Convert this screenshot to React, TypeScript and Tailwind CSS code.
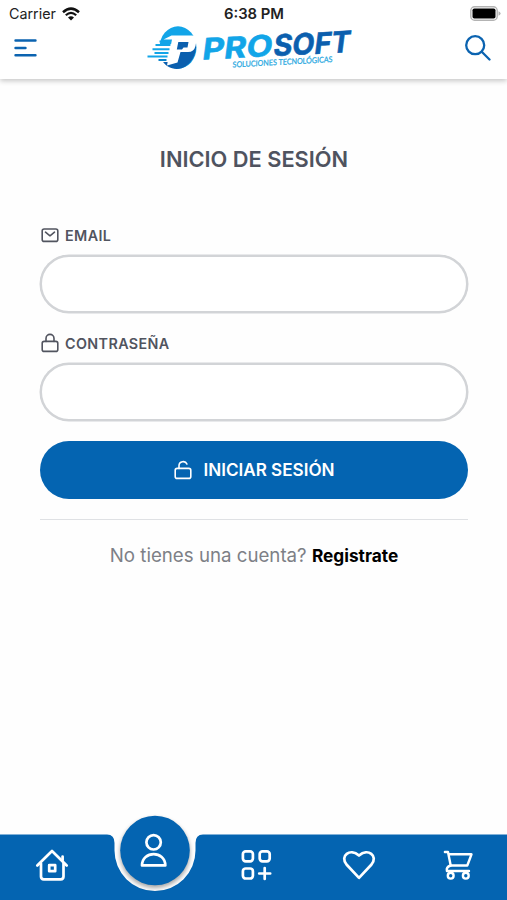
import type { ReactNode } from "react";

function WifiIcon() {
  return (
    <svg className="h-[14px] w-[18px]" viewBox="0 0 18 14" fill="none">
      <path d="M1 5.2Q9-2 17 5.2" stroke="#111" strokeWidth="2.5" />
      <path d="M3.8 8.2Q9 3.4 14.2 8.2" stroke="#111" strokeWidth="2.2" />
      <path d="M9 13.6 6 10.6Q9 8 12 10.6Z" fill="#111" />
    </svg>
  );
}

function BatteryIcon() {
  return (
    <svg className="h-[15px] w-[31px]" viewBox="0 0 31 15" fill="none">
      <rect x="0.8" y="0.8" width="26.4" height="13.4" rx="3.8" stroke="#b3b3b3" strokeWidth="1.4" />
      <rect x="2.5" y="2.5" width="23" height="10" rx="1.8" fill="#000" />
      <path d="M28.5 5.2Q30.6 6 30.6 7.5T28.5 9.8Z" fill="#b3b3b3" />
    </svg>
  );
}

function Logo() {
  return (
    <svg className="h-[46px] w-[212px] overflow-visible" viewBox="145.500 25 212 46">
      <ellipse cx="178.500" cy="47.500" rx="18.500" ry="21.200" fill="#12a5e8" />
      <path d="M196 41C198.500 53 192 65 182 68.300C174 70.500 166 67 162 59.500L172 60L186 40Z" fill="#0b5fae" />
      <path d="M158 44H173V62H158Z" fill="#fff" />
      <g stroke="#12a5e8" strokeWidth="2">
        <path d="M156 45H171M160 41.500H171M153 49.300H170M155 53H169M148 56.500H168" />
        <path d="M159 60H167" stroke="#0b84cc" />
      </g>
      <path
        d="M172 35.500H192.500Q198 35.500 197 40.500L196 46Q194.500 52 188.500 52H181L178 62.500L167.500 65.500L170 52L172.500 39.500H164Z"
        fill="#fff"
      />
      <path d="M178.800 42H189L188 47.500H184L182.500 49.500H177.300Z" fill="#0b5fae" />
      <g
        transform="matrix(1 -0.05 -0.13 1 202 59.500)"
        fontFamily="Inter, sans-serif"
        fontSize="29.5"
        fontWeight="700"
        strokeWidth="0.6"
      >
        <text x="0" y="0" textLength="70" lengthAdjust="spacingAndGlyphs" fill="#12a5e8" stroke="#12a5e8">
          PRO
        </text>
        <text x="71" y="0" textLength="77" lengthAdjust="spacingAndGlyphs" fill="#0b5fae" stroke="#0b5fae">
          SOFT
        </text>
      </g>
      <text
        transform="matrix(1 -0.055 -0.02 1 233 67.500)"
        fontFamily="Lato, sans-serif"
        fontSize="8"
        fontWeight="400"
        textLength="100"
        lengthAdjust="spacingAndGlyphs"
        fill="#27a8df"
        stroke="#27a8df"
        strokeWidth="0.25"
      >
        SOLUCIONES TECNOLÓGICAS
      </text>
    </svg>
  );
}

function Header() {
  return (
    <header className="relative h-[79px] bg-white shadow-[0_2px_5px_rgba(0,0,0,0.22)]">
      <div className="grid h-[27px] grid-cols-3 items-center pl-[8px] pr-[7px] text-[#222]">
        <div className="flex items-center gap-[6px] pl-px text-[14.3px]">
          Carrier
          <WifiIcon />
        </div>
        <div className="whitespace-nowrap pt-px text-center text-[14.8px] font-semibold">6:38 PM</div>
        <div className="-mr-px flex justify-end">
          <BatteryIcon />
        </div>
      </div>
      <div className="flex h-[42px] items-center justify-between pl-[14px] pr-[16px]">
        <svg className="h-[20px] w-[23px]" viewBox="0 0 23 20" stroke="#0b63b0" strokeWidth="2.4" strokeLinecap="round">
          <path d="M1.500 2.500H21.500M1.500 10H11.500M1.500 17.300H21.500" />
        </svg>
        <Logo />
        <svg className="h-[26px] w-[26px]" viewBox="0 0 26 26" fill="none" stroke="#0b63b0" strokeWidth="2.3" strokeLinecap="round">
          <circle cx="10.200" cy="10.200" r="9" />
          <path d="m17 17 7.500 7.500" />
        </svg>
      </div>
    </header>
  );
}

function MailIcon() {
  return (
    <svg className="h-[20px] w-[20px]" viewBox="0 0 20 20" fill="none" stroke="currentColor" strokeWidth="1.600" strokeLinecap="round" strokeLinejoin="round">
      <rect x="2.200" y="4" width="15.600" height="12.400" rx="2" />
      <path d="m5.500 7.200 4.500 3.600 4.500-3.600" />
    </svg>
  );
}

function LockIcon({ open = false }: { open?: boolean }) {
  return (
    <svg className="h-[20px] w-[20px]" viewBox="0 0 20 20" fill="none" stroke="currentColor" strokeWidth="1.600" strokeLinecap="round" strokeLinejoin="round">
      <rect x="2.200" y="8.400" width="15.600" height="10" rx="2" />
      <path d={open ? "M6 8.400V5.800C6 1 12.400.4 13.900 4" : "M6 8.400V5.400a4 4 0 0 1 8 0v3"} />
    </svg>
  );
}

function Field({ label, type, icon }: { label: string; type: string; icon: ReactNode }) {
  return (
    <label className="block text-[#51545f]">
      <span className="flex h-[20px] items-center gap-[5px] text-[14.3px] font-semibold tracking-[0.4px]">
        {icon}
        <span className="pt-px">{label}</span>
      </span>
      <input
        type={type}
        className="mt-[10px] block h-[58px] w-full rounded-full border-2 border-[#d2d4d7] bg-white px-6 shadow-[0_0_0_0.5px_#d2d4d7] outline-none"
      />
    </label>
  );
}

function TabButton({ name, children }: { name: string; children: ReactNode }) {
  return (
    <button aria-label={name} className="w-9">
      <svg className="h-9 w-9" viewBox="0 0 36 36" fill="none" stroke="#fff" strokeWidth="2.700" strokeLinecap="round" strokeLinejoin="round">
        {children}
      </svg>
    </button>
  );
}

function TabBar() {
  return (
    <nav className="relative h-[88px]">
      <svg className="absolute inset-0 h-[88px] w-full" viewBox="0 0 507 88">
        <defs>
          <filter id="soft" x="-20%" y="-20%" width="140%" height="150%">
            <feGaussianBlur stdDeviation="2" />
          </filter>
        </defs>
        <path d="M0 22.500H107Q114.500 22.500 114.500 31V38.500A40.500 40.500 0 0 0 195.500 38.500V31Q195.500 22.500 203 22.500H507V88H0Z" fill="#0464b1" />
        <circle cx="155" cy="41" r="35" fill="#000" opacity="0.350" filter="url(#soft)" />
        <circle cx="155" cy="38.500" r="34.800" fill="#0464b1" />
        <g fill="none" stroke="#fff" strokeWidth="2.700" strokeLinejoin="round">
          <circle cx="153.600" cy="30.300" r="7.200" />
          <path d="M142 53.400C142 38.300 165.300 38.300 165.300 53.400Z" />
        </g>
      </svg>
      <div className="relative flex h-full items-center pl-[34px] pt-[18px]">
        <TabButton name="home">
          <path d="M3.300 18.500 18 4 32.700 18.500" />
          <path d="M7 16.500v13q0 2.800 2.800 2.800h16.900q2.800 0 2.800-2.800V16.500M28.600 13V9.500" />
          <rect x="15.200" y="18.200" width="6" height="6" />
        </TabButton>
        <button aria-label="account" className="ml-[49px] mr-[49px] w-[70px]" />
        <TabButton name="categories">
          <rect x="4.900" y="4.300" width="10" height="10" rx="2.800" />
          <rect x="21.700" y="4.300" width="10" height="10" rx="2.800" />
          <rect x="4.900" y="21.500" width="10" height="10" rx="2.800" />
          <path d="M26.700 21v11M21.200 26.500h11" />
        </TabButton>
        <div className="ml-[67px] pt-[3px]">
          <TabButton name="favorites">
            <path d="M18 31.800 5.500 18.500C-1.500 10 9 1.500 18 9.500C27 1.500 37.500 10 30.500 18.500Z" />
          </TabButton>
        </div>
        <div className="ml-[63px] pt-[5px]">
          <TabButton name="cart">
            <g strokeWidth="2.400">
              <path d="M4.900 5H8L10.700 18.500H27.300L31.500 7.300H8.600" />
              <path d="M10.700 18.500C7.500 19.500 6.300 21.500 6.900 24H29" />
              <circle cx="10.700" cy="28.700" r="2.900" />
              <circle cx="25.800" cy="28.700" r="2.900" />
            </g>
          </TabButton>
        </div>
      </div>
    </nav>
  );
}

function App() {
  return (
    <div className="flex h-[900px] w-[507px] flex-col overflow-hidden bg-[#fefefe] font-[Inter,sans-serif]">
      <Header />
      <main className="flex-1 pl-[40px] pr-[39px] pt-[63px]">
        <h1 className="text-center text-[21.800px] font-semibold leading-[34px] text-[#4f535f]">INICIO DE SESIÓN</h1>
        <form className="mt-[49px]">
          <Field label="EMAIL" type="email" icon={<MailIcon />} />
          <div className="mt-[20px]">
            <Field label="CONTRASEÑA" type="password" icon={<LockIcon />} />
          </div>
          <button
            type="button"
            className="mt-[20px] flex h-[58px] w-full items-center justify-center gap-[10px] rounded-full bg-[#0464b1] text-[17.100px] font-semibold text-white"
          >
            <LockIcon open />
            INICIAR SESIÓN
          </button>
        </form>
        <div className="mt-[20px] border-t border-[#dfe1e4] pt-[22px] text-center text-[18.700px] leading-[28px] text-[#7d8086]">
          No tienes una cuenta? <a className="text-[17.300px] font-bold text-black">Registrate</a>
        </div>
      </main>
      <TabBar />
    </div>
  );
}

export default App;
